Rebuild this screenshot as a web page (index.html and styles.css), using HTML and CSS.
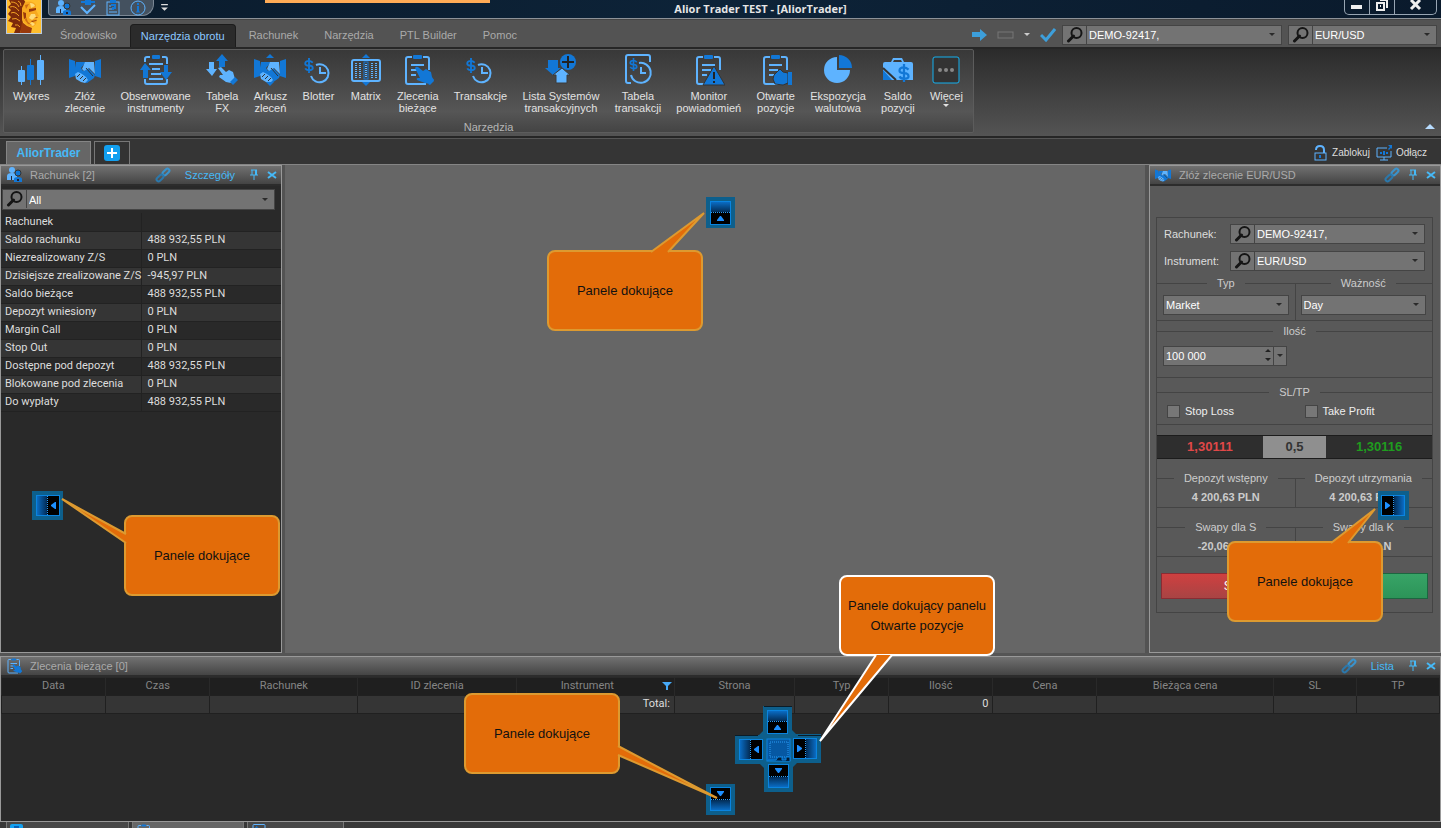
FILE: index.html
```html
<!DOCTYPE html>
<html lang="pl">
<head>
    <meta charset="UTF-8">
    <meta name="viewport" content="width=device-width, initial-scale=1.0">
    <title>Alior Trader TEST - [AliorTrader]</title>
    <link rel="stylesheet" href="styles.css">
</head>
<body>
    <!-- icon set -->
    <svg class="icon-defs" aria-hidden="true">
        <symbol id="i-candles" viewBox="0 0 32 32">
            <g fill="#5eb3ff"><rect x="3" y="16" width="7" height="12" rx="1"/><rect x="6" y="12" width="1" height="19"/><rect x="22" y="6" width="7" height="20" rx="1"/><rect x="25" y="1" width="1" height="30"/></g>
            <g fill="#1277d6"><rect x="12" y="11" width="7" height="15" rx="1"/><rect x="15" y="5" width="1" height="26"/></g>
        </symbol>
        <symbol id="i-hands" viewBox="0 0 32 32">
            <path fill="#1277d6" d="M0 5l6 2v15l-6 2zM32 5l-6 2v15l6 2zM7 8h10l-5 6 2 3 5-3 7 7-1 3-7 5-4-1-9-9z"/>
            <path fill="#5eb3ff" d="M16 8h9l1 12-6-6-5 3-2-2zM6 20l3-2 4 2 4 3 2 3-3 3-4-1-5-3z"/>
            <path stroke="#333" fill="none" d="M8 23l3-3M11 25l3-3M14 27l3-3M17 14l7 8"/>
        </symbol>
        <symbol id="i-clip" viewBox="0 0 32 32">
            <path fill="none" stroke="#5eb3ff" stroke-width="2" d="M10 3H6q-2 0-2 2v23q0 2 2 2h18M21 3h4q2 0 2 2v11"/>
            <rect x="11" y="1" width="9" height="4" rx="1" fill="#1277d6"/>
            <path stroke="#5eb3ff" stroke-width="2" d="M9 11h13M9 16h9M9 21h5"/>
        </symbol>
        <symbol id="i-hand" viewBox="0 0 20 20">
            <path fill="#1277d6" d="M1 2q1-2 3-1l5 4 3-2 3 2 2 1 1 5 2 3-4 4-5-1-8-3q-1-2 1-2l2 0z"/>
            <path fill="#1277d6" d="M14 18l5-5 1 2-4 4z"/>
        </symbol>
        <symbol id="i-orders" viewBox="0 0 32 32">
            <use href="#i-clip" width="32" height="32"/>
            <use href="#i-hand" x="12" y="12" width="20" height="20"/>
        </symbol>
        <symbol id="i-watch" viewBox="0 0 32 32">
            <path fill="none" stroke="#5eb3ff" stroke-width="2" d="M10 3H7q-2 0-2 2v3M22 3h3q2 0 2 2v5M5 25v3q0 2 2 2h18q2 0 2-2v-3"/>
            <rect x="12" y="1" width="8" height="4" rx="1" fill="#1277d6"/>
            <path stroke="#5eb3ff" stroke-width="2" d="M9 10h14M12 15h8M11 20h10M9 25h14"/>
            <path fill="#1277d6" d="M5 9l6 7H8v8H3v-8H0zM24 11h4v7h4l-6 8-6-8h4z"/>
        </symbol>
        <symbol id="i-tabfx" viewBox="0 0 32 32">
            <path fill="#1277d6" d="M16 0l6 7h-3v6h-6V7h-3z"/>
            <path fill="#5eb3ff" d="M3 8h5v7h3l-5 7-6-7h3zM12 14l3-1 5 5 3-2 4 2 2 7-4 4-5-1-7-5 1-2 3 0z"/>
            <path fill="#1277d6" d="M24 28l5-5 3 3-5 5z"/>
        </symbol>
        <symbol id="i-dollar" viewBox="0 0 10 16">
            <path fill="none" stroke="#1277d6" stroke-width="2" d="M9 5Q7 3 5 3 1 3 1 6q0 2 4 2t4 3q0 2-4 2-3 0-4-2M5 0v16"/>
        </symbol>
        <symbol id="i-blotter" viewBox="0 0 32 32">
            <use href="#i-dollar" x="2" y="4" width="10" height="15"/>
            <path fill="none" stroke="#5eb3ff" stroke-width="2" d="M14 11a9 9 0 1 1-5 11M18 13v6h6"/>
        </symbol>
        <symbol id="i-matrix" viewBox="0 0 32 32">
            <rect x="2" y="6" width="28" height="21" rx="2" fill="none" stroke="#5eb3ff" stroke-width="2"/>
            <rect x="14" y="8" width="4" height="17" fill="none" stroke="#1277d6"/>
            <path fill="#1277d6" d="M16 0l4 4h-8zM16 32l4-4h-8z"/>
            <path stroke="#5eb3ff" stroke-width="2" stroke-dasharray="1 1" d="M6 9v15M10 9v15M22 9v15M26 9v15M16 10v13"/>
        </symbol>
        <symbol id="i-systems" viewBox="0 0 32 32">
            <path fill="#1277d6" d="M3 6h10v8h3l-8 7-8-7h3z"/>
            <circle cx="23" cy="8" r="8" fill="#1277d6"/>
            <path stroke="#222" stroke-width="2" d="M17 8h12M23 2v12"/>
            <path fill="#5eb3ff" stroke="#3b3b3b" d="M17 14l8 7h-3v8H11v-8H8z"/>
        </symbol>
        <symbol id="i-tabtrans" viewBox="0 0 32 32">
            <path fill="none" stroke="#5eb3ff" stroke-width="2" d="M9 29H6q-2 0-2-2V3q0-2 2-2h20q2 0 2 2v5"/>
            <use href="#i-dollar" x="7" y="4" width="9" height="13"/>
            <path fill="none" stroke="#5eb3ff" stroke-width="2" d="M17 9a10 10 0 1 1-8 12M19 13v6h5"/>
        </symbol>
        <symbol id="i-monitor" viewBox="0 0 32 32">
            <use href="#i-clip" width="32" height="32"/>
            <path fill="#1277d6" stroke="#333" d="M21 12l11 19H10z"/>
            <path stroke="#222" stroke-width="2" d="M21 18v7M21 27v2"/>
        </symbol>
        <symbol id="i-open" viewBox="0 0 32 32">
            <use href="#i-clip" width="32" height="32"/>
            <path fill="#1277d6" stroke="#333" d="M20 15l3 3 5 1v10l-5 2-8-1-2-5 1-4z"/>
            <path fill="#1277d6" d="M28 18h4v13h-4z"/>
        </symbol>
        <symbol id="i-pie" viewBox="0 0 32 32">
            <path fill="#5eb3ff" d="M15 3v13h13A13 13 0 1 1 15 3z"/>
            <path fill="#1277d6" d="M17 1a13 13 0 0 1 13 13H17z"/>
        </symbol>
        <symbol id="i-case" viewBox="0 0 32 32">
            <path fill="#5eb3ff" d="M3 8h6l2-4h9l2 4h7q2 0 2 2v16H1V10q0-2 2-2z"/>
            <path fill="#3b3b3b" d="M12 6h7l1 2h-9z"/>
            <path fill="none" stroke="#333" stroke-width="2" d="M1 14l13 12"/>
            <path fill="#1277d6" d="M1 16l9 10H1z"/>
            <use href="#i-dollar" x="16" y="10" width="12" height="18"/>
        </symbol>
        <symbol id="i-more" viewBox="0 0 32 32">
            <rect x="3" y="3" width="26" height="26" rx="2" fill="#333" stroke="#14b1f0"/>
            <g fill="#888"><circle cx="10" cy="16" r="2"/><circle cx="16" cy="16" r="2"/><circle cx="22" cy="16" r="2"/></g>
        </symbol>
        <symbol id="i-users" viewBox="0 0 16 16">
            <circle cx="6" cy="3" r="3" fill="#5eb3ff"/><path fill="#5eb3ff" d="M1 13V9q0-3 5-3t5 3v4z"/>
            <circle cx="12" cy="6" r="3" fill="#1277d6" stroke="#333"/><path fill="#1277d6" d="M8 15v-3q0-2 4-2t4 2v3z"/>
            <path fill="#223" d="M5 9h1v4H5zM11 12h2v2h-2z"/>
        </symbol>
        <symbol id="i-plug" viewBox="0 0 16 16">
            <path fill="#1277d6" d="M1 1h4V0h6v1h4v2h-4v2H5V3H1z"/><path fill="none" stroke="#5eb3ff" stroke-width="2" d="M1 7l6 6 8-8"/>
        </symbol>
        <symbol id="i-help" viewBox="0 0 16 16">
            <rect x="2" y="2" width="12" height="13" fill="none" stroke="#5eb3ff"/><path stroke="#5eb3ff" d="M4 12h8M4 9h3M4 6h2"/>
            <rect x="5" y="0" width="6" height="3" fill="#1277d6"/><path fill="none" stroke="#1277d6" stroke-width="2" d="M6 5h4v3H8v2"/>
        </symbol>
        <symbol id="i-info" viewBox="0 0 16 16">
            <circle cx="8" cy="8" r="7" fill="none" stroke="#5eb3ff"/><path stroke="#1277d6" stroke-width="2" d="M8 3v2M8 6v6"/><path stroke="#1277d6" d="M6 12h4"/>
        </symbol>
        <symbol id="i-loupe" viewBox="0 0 16 16">
            <circle cx="10" cy="6" r="5" fill="none" stroke="#151515" stroke-width="2"/><path stroke="#151515" stroke-width="3" stroke-linecap="round" d="M7 9l-5 5"/>
        </symbol>
        <symbol id="i-arrow" viewBox="0 0 8 8"><path fill="currentColor" d="M1 2h6L4 5z"/></symbol>
        <symbol id="i-link" viewBox="0 0 16 16">
            <g fill="none" stroke-width="2"><rect x="7" y="3" width="8" height="4" rx="2" stroke="#3a93cc" transform="rotate(-45 11 5)"/><rect x="1" y="9" width="8" height="4" rx="2" stroke="#2c78ab" transform="rotate(-45 5 11)"/></g>
        </symbol>
        <symbol id="i-pin" viewBox="0 0 10 12"><path fill="none" stroke="#46b9f7" d="M3 1v5M2 1h6M1 6h8M5 6v5"/><path stroke="#46b9f7" stroke-width="2" d="M7 1v5"/></symbol>
        <symbol id="i-x" viewBox="0 0 10 10"><path stroke="#46b9f7" stroke-width="2" d="M1 2l8 6M9 2L1 8"/></symbol>
        <symbol id="i-lock" viewBox="0 0 16 16">
            <path fill="none" stroke="#5eb3ff" stroke-width="2" d="M4 5q0-4 4-4t4 4v3"/><rect x="3" y="8" width="11" height="7" fill="none" stroke="#5eb3ff"/><rect x="7" y="10" width="2" height="3" fill="#1277d6"/>
        </symbol>
        <symbol id="i-screen" viewBox="0 0 16 16">
            <path fill="none" stroke="#5eb3ff" d="M11 3H1v9h14V6M8 12v3M4 15h8"/><path fill="#1277d6" d="M12 0h4v4l-1-1-2 2-1-1 2-2zM4 7h2v2H4zM7 6h2v4H7zM10 7h2v2h-2z"/>
        </symbol>
        <symbol id="i-funnel" viewBox="0 0 10 10"><path fill="#46a9f7" d="M0 1h10L6 5v4H4V5z"/></symbol>
        <!-- docking target, "up" variant; the others are rotated -->
        <symbol id="i-dock" viewBox="0 0 29 31">
            <rect width="29" height="31" fill="#0d5f8c"/>
            <rect x="4" y="4" width="21" height="24" fill="#0a84e0"/>
            <rect x="5" y="5" width="19" height="22" fill="#000"/>
            <rect x="5" y="5" width="19" height="10" fill="url(#g-dock)"/>
            <path stroke="#2a9bf5" stroke-dasharray="1 1" d="M5 15.500h19"/><path fill="#1e90ff" d="M14 19h1l3 4v1h-7v-1z"/>
        </symbol>
        <linearGradient id="g-dock" x2="0" y2="1"><stop stop-color="#0a6cc4"/><stop offset="1" stop-color="#032c55"/></linearGradient>
    </svg>

    <div class="app">
        <header class="titlebar">
            <svg class="app-logo" viewBox="0 0 36 34" aria-label="Alior">
                <rect width="36" height="34" fill="#b9c9dd"/><rect x="1" y="0" width="34" height="33" fill="#ffbe2c"/>
                <path fill="#7d2a0a" d="M3 0h15l2 3-3 4 1 6-2 5 1 6-3 9H8l2-5-5-1 2-4-5-2 3-4-3-3 3-4-3-3 3-3z"/>
                <path fill="none" stroke="#f0a024" d="M5 2q6 0 8 5M4 7q5-2 9 4M5 13q4-2 8 3M6 19q4-2 8 2M9 25q3-1 5 2M12 1q3 1 3 5"/>
                <path fill="#f7a81f" d="M19 2q8-2 11 3v5l3 6-2 1v3l-1 4-3 3-5-1-6-6V8z"/>
                <path fill="#ffdc7a" d="M24 3q4 0 5 3l-4 2zM25 14h4l1 3-4 3-3-2zM26 22l3 2-2 2-4-2z"/>
                <path fill="#9a3a0c" d="M23 9l7-1v2l-3 1-4 1zM28 18l4-1-1 1zM25 21l6-1-1 1-4 1zM17 12l3 1v5l-2 1zM16 22l5 4 5 2-1 5H14z"/>
                <path fill="#ce6c12" d="M19 5l4-1-3 5zM20 17l2 5 4 3-4-1-3-4z"/>
            </svg>
            <nav class="quick" aria-label="Szybki dostęp">
                <button class="icon-btn" aria-label="Konta"><svg width="16" height="16"><use href="#i-users"/></svg></button>
                <button class="icon-btn" aria-label="Połącz"><svg width="16" height="16"><use href="#i-plug"/></svg></button>
                <button class="icon-btn" aria-label="Instrukcja"><svg width="16" height="16"><use href="#i-help"/></svg></button>
                <button class="icon-btn" aria-label="Informacje"><svg width="16" height="16"><use href="#i-info"/></svg></button>
            </nav>
            <svg class="quick-more" viewBox="0 0 8 8" aria-hidden="true"><path fill="#ddd" d="M1 0h6v1H1zM1 3h6L4 6z"/></svg>
            <h1 class="title">Alior Trader TEST - [AliorTrader]</h1>
            <div class="win-buttons">
                <button aria-label="Minimalizuj"><svg width="14" height="12"><path fill="#eee" d="M1 5h11v4H1z"/></svg></button>
                <button aria-label="Przywróć"><svg width="14" height="12"><path fill="none" stroke="#eee" stroke-width="2" d="M5 0h7v8M2 3h7v7H2zM5 6h1"/></svg></button>
                <button class="close" aria-label="Zamknij"><svg width="14" height="12"><path stroke="#eee" stroke-width="3" d="M2 0l9 9M11 0L2 9"/></svg></button>
            </div>
        </header>

        <div class="menubar">
            <nav class="menu">
                <a href="#">Środowisko</a>
                <a href="#" class="active">Narzędzia obrotu</a>
                <a href="#">Rachunek</a>
                <a href="#">Narzędzia</a>
                <a href="#">PTL Builder</a>
                <a href="#">Pomoc</a>
            </nav>
            <div class="menu-tools">
                <svg width="16" height="14"><path fill="#3d9fdb" d="M0 4h8V1l7 6-7 6V9H0z"/></svg>
                <svg width="17" height="8"><rect x="1" y="1" width="15" height="6" fill="none" stroke="#777"/></svg>
                <svg class="light" width="8" height="8"><use href="#i-arrow"/></svg>
                <svg width="16" height="14"><path fill="none" stroke="#3d9fdb" stroke-width="3" d="M1 7l5 5 9-11"/></svg>
            </div>
            <div class="combo combo-wide">
                <svg class="loupe"><use href="#i-loupe"/></svg>
                <select aria-label="Rachunek"><option>DEMO-92417,</option></select>
                <svg class="arrow"><use href="#i-arrow"/></svg>
            </div>
            <div class="combo combo-narrow">
                <svg class="loupe"><use href="#i-loupe"/></svg>
                <select aria-label="Instrument"><option>EUR/USD</option></select>
                <svg class="arrow"><use href="#i-arrow"/></svg>
            </div>
        </div>

        <div class="ribbon">
            <section class="ribbon-group">
                <div class="tools">
                    <button class="tool"><svg><use href="#i-candles"/></svg>Wykres</button>
                    <button class="tool"><svg><use href="#i-hands"/></svg>Złóż<br>zlecenie</button>
                    <button class="tool"><svg><use href="#i-watch"/></svg>Obserwowane<br>instrumenty</button>
                    <button class="tool"><svg><use href="#i-tabfx"/></svg>Tabela<br>FX</button>
                    <button class="tool"><svg viewBox="0 0 32 32"><use href="#i-hands"/><path fill="#1277d6" d="M16 0l4 4h-8zM16 32l4-4h-8z"/></svg>Arkusz<br>zleceń</button>
                    <button class="tool"><svg><use href="#i-blotter"/></svg>Blotter</button>
                    <button class="tool"><svg><use href="#i-matrix"/></svg>Matrix</button>
                    <button class="tool"><svg><use href="#i-orders"/></svg>Zlecenia<br>bieżące</button>
                    <button class="tool"><svg><use href="#i-blotter"/></svg>Transakcje</button>
                    <button class="tool"><svg><use href="#i-systems"/></svg>Lista Systemów<br>transakcyjnych</button>
                    <button class="tool"><svg><use href="#i-tabtrans"/></svg>Tabela<br>transakcji</button>
                    <button class="tool"><svg><use href="#i-monitor"/></svg>Monitor<br>powiadomień</button>
                    <button class="tool"><svg><use href="#i-open"/></svg>Otwarte<br>pozycje</button>
                    <button class="tool"><svg><use href="#i-pie"/></svg>Ekspozycja<br>walutowa</button>
                    <button class="tool"><svg><use href="#i-case"/></svg>Saldo<br>pozycji</button>
                    <button class="tool"><svg><use href="#i-more"/></svg>Więcej<svg class="drop"><use href="#i-arrow"/></svg></button>
                </div>
                <div class="group-name">Narzędzia</div>
            </section>
            <button class="collapse" aria-label="Zwiń wstążkę"><svg width="10" height="6"><path fill="#b7dcff" d="M5 0l5 5H0z"/></svg></button>
        </div>

        <div class="tabstrip">
            <button class="ws-tab">AliorTrader</button>
            <button class="ws-add" aria-label="Dodaj"><svg width="16" height="16"><rect width="16" height="16" rx="3" fill="#12a0f0"/><path stroke="#fff" stroke-width="2" d="M8 3v10M3 8h10"/></svg></button>
            <div class="strip-actions">
                <button><svg width="16" height="16"><use href="#i-lock"/></svg>Zablokuj</button>
                <button><svg width="16" height="16"><use href="#i-screen"/></svg>Odłącz</button>
            </div>
        </div>

        <main class="workspace">
            <section class="panel panel-left">
                <header class="panel-head">
                    <svg class="head-icon"><use href="#i-users"/></svg>
                    <h2>Rachunek [2]</h2>
                    <svg class="head-link"><use href="#i-link"/></svg>
                    <a href="#">Szczegóły</a>
                    <button class="icon-btn" aria-label="Przypnij"><svg width="10" height="12"><use href="#i-pin"/></svg></button>
                    <button class="icon-btn" aria-label="Zamknij"><svg width="10" height="10"><use href="#i-x"/></svg></button>
                </header>
                <div class="filter">
                    <div class="combo">
                        <svg class="loupe"><use href="#i-loupe"/></svg>
                        <select aria-label="Filtr"><option>All</option></select>
                        <svg class="arrow"><use href="#i-arrow"/></svg>
                    </div>
                </div>
                <table class="account">
                    <tr><th>Rachunek</th><td></td></tr>
                    <tr><th>Saldo rachunku</th><td>488 932,55 PLN</td></tr>
                    <tr><th>Niezrealizowany Z/S</th><td>0 PLN</td></tr>
                    <tr><th>Dzisiejsze zrealizowane Z/S</th><td>-945,97 PLN</td></tr>
                    <tr><th>Saldo bieżące</th><td>488 932,55 PLN</td></tr>
                    <tr><th>Depozyt wniesiony</th><td>0 PLN</td></tr>
                    <tr><th>Margin Call</th><td>0 PLN</td></tr>
                    <tr><th>Stop Out</th><td>0 PLN</td></tr>
                    <tr><th>Dostępne pod depozyt</th><td>488 932,55 PLN</td></tr>
                    <tr><th>Blokowane pod zlecenia</th><td>0 PLN</td></tr>
                    <tr><th>Do wypłaty</th><td>488 932,55 PLN</td></tr>
                </table>
            </section>

            <div class="canvas"></div>

            <section class="panel panel-right">
                <header class="panel-head">
                    <svg class="head-icon"><use href="#i-hands"/></svg>
                    <h2>Złóż zlecenie EUR/USD</h2>
                    <svg class="head-link"><use href="#i-link"/></svg>
                    <button class="icon-btn" aria-label="Przypnij"><svg width="10" height="12"><use href="#i-pin"/></svg></button>
                    <button class="icon-btn" aria-label="Zamknij"><svg width="10" height="10"><use href="#i-x"/></svg></button>
                </header>
                <form class="order">
                    <div class="field">
                        <label for="acc">Rachunek:</label>
                        <div class="combo">
                            <svg class="loupe"><use href="#i-loupe"/></svg>
                            <select id="acc"><option>DEMO-92417,</option></select>
                            <svg class="arrow"><use href="#i-arrow"/></svg>
                        </div>
                    </div>
                    <div class="field">
                        <label for="instr">Instrument:</label>
                        <div class="combo">
                            <svg class="loupe"><use href="#i-loupe"/></svg>
                            <select id="instr"><option>EUR/USD</option></select>
                            <svg class="arrow"><use href="#i-arrow"/></svg>
                        </div>
                    </div>
                    <div class="pair pair-select">
                        <div class="cell">
                            <label class="rule" for="typ">Typ</label>
                            <div class="combo">
                                <select id="typ"><option>Market</option></select>
                                <svg class="arrow"><use href="#i-arrow"/></svg>
                            </div>
                        </div>
                        <div class="cell">
                            <label class="rule" for="valid">Ważność</label>
                            <div class="combo">
                                <select id="valid"><option>Day</option></select>
                                <svg class="arrow"><use href="#i-arrow"/></svg>
                            </div>
                        </div>
                    </div>
                    <div class="block amount">
                        <label class="rule" for="qty">Ilość</label>
                        <div class="combo">
                            <input id="qty" type="text" value="100 000">
                            <svg class="spin" viewBox="0 0 8 16"><path fill="#222" d="M1 5h6L4 2zM1 11h6l-3 3z"/></svg>
                            <svg class="arrow split"><use href="#i-arrow"/></svg>
                        </div>
                    </div>
                    <div class="block sltp">
                        <div class="rule">SL/TP</div>
                        <div class="checks">
                            <label><input type="checkbox">Stop Loss</label>
                            <label><input type="checkbox">Take Profit</label>
                        </div>
                    </div>
                    <div class="prices">
                        <span class="sell">1,30111</span>
                        <span class="spread">0,5</span>
                        <span class="buy">1,30116</span>
                    </div>
                    <div class="pair">
                        <div class="cell"><div class="rule">Depozyt wstępny</div><b>4 200,63 PLN</b></div>
                        <div class="cell"><div class="rule">Depozyt utrzymania</div><b>4 200,63 PLN</b></div>
                    </div>
                    <div class="pair">
                        <div class="cell"><div class="rule">Swapy dla S</div><b>-20,06 PLN</b></div>
                        <div class="cell"><div class="rule">Swapy dla K</div><b>-12,35 PLN</b></div>
                    </div>
                    <div class="submit">
                        <button type="button" class="btn-sell">S</button>
                        <button type="button" class="btn-buy">K</button>
                    </div>
                </form>
            </section>
        </main>

        <section class="panel panel-bottom">
            <header class="panel-head">
                <svg class="head-icon"><use href="#i-orders"/></svg>
                <h2>Zlecenia bieżące [0]</h2>
                <svg class="head-link"><use href="#i-link"/></svg>
                <a href="#">Lista</a>
                <button class="icon-btn" aria-label="Przypnij"><svg width="10" height="12"><use href="#i-pin"/></svg></button>
                <button class="icon-btn" aria-label="Zamknij"><svg width="10" height="10"><use href="#i-x"/></svg></button>
            </header>
            <table class="orders">
                <colgroup><col class="c-m"><col class="c-m"><col class="c-xl"><col class="c-xxl"><col class="c-xxl"><col class="c-l"><col class="c-s"><col class="c-m"><col class="c-m"><col class="c-xxxl"><col class="c-xs"><col class="c-xs"></colgroup>
                <thead>
                    <tr><th>Data</th><th>Czas</th><th>Rachunek</th><th>ID zlecenia</th><th><span class="filtered">Instrument <svg width="10" height="10"><use href="#i-funnel"/></svg></span></th><th>Strona</th><th>Typ</th><th>Ilość</th><th>Cena</th><th>Bieżąca cena</th><th>SL</th><th>TP</th></tr>
                </thead>
                <tbody>
                    <tr><td></td><td></td><td></td><td></td><td>Total:</td><td></td><td></td><td>0</td><td></td><td></td><td></td><td></td></tr>
                </tbody>
            </table>
        </section>

        <footer class="bottom-tabs">
            <button aria-label="Otwarte pozycje"><svg width="16" height="16"><rect width="13" height="12" rx="2" fill="#12a0f0"/><rect x="4" y="2" width="5" height="8" fill="#0a5fb4"/></svg></button>
            <button class="active" aria-label="Zlecenia bieżące"><svg width="16" height="16"><use href="#i-orders"/></svg></button>
            <button aria-label="Transakcje"><svg width="16" height="16"><use href="#i-tabtrans"/></svg></button>
        </footer>
    </div>

    <!-- docking targets and callouts floating over the window -->
    <div class="overlay">
        <div class="strip"></div>
        <svg class="dock dock-top"><use href="#i-dock"/></svg>
        <svg class="dock dock-bottom"><use href="#i-dock"/></svg>
        <svg class="dock dock-left"><use href="#i-dock"/></svg>
        <svg class="dock dock-right"><use href="#i-dock"/></svg>
        <svg class="compass" viewBox="0 0 86 86">
            <path fill="#0d5f8c" d="M29 0h28v24l5 5h24v28H62l-5 5v24H29V62l-5-5H0V29h24l5-5z"/>
            <use href="#i-dock" x="28" y="0" width="29" height="31"/>
            <use href="#i-dock" x="28" y="0" width="29" height="31" transform="rotate(180 43 43)"/>
            <use href="#i-dock" x="28" y="0" width="29" height="31" transform="rotate(-90 43 43)"/>
            <use href="#i-dock" x="28" y="0" width="29" height="31" transform="rotate(90 43 43)"/>
            <path fill="#0a1c28" d="M29 0h28v1H29zM0 29h23v1H0zM63 29h23v1H63z"/>
            <rect x="32" y="33" width="23" height="22" fill="#0658a3" stroke="#0a84e0"/>
            <rect x="35" y="36" width="18" height="15" fill="none" stroke="#2a9bf5" stroke-dasharray="1 1"/>
            <path fill="#031a33" stroke="#0a84e0" d="M33 54h8l2-3h4v3h4v-3h4v4"/>
        </svg>
        <div class="callout co-top">Panele dokujące</div>
        <div class="callout co-left">Panele dokujące</div>
        <div class="callout co-right">Panele dokujące</div>
        <div class="callout co-bottom">Panele dokujące</div>
        <div class="callout co-compass">Panele dokujący panelu<br>Otwarte pozycje</div>
        <svg class="tails" viewBox="0 0 1441 828">
            <path d="M651 252L704 213 668 252"/>
            <path d="M126 534L62 499 126 543"/>
            <path d="M1331 543L1375 509 1348 543"/>
            <path d="M618 746L717 798 618 755"/>
            <path class="white" d="M876 655L820 741 892 655"/>
        </svg>
    </div>
</body>
</html>
```
FILE: styles.css
```css
* {
    margin: 0;
    padding: 0;
    box-sizing: border-box;
}

body {
    font-family: "Liberation Sans", Arial, sans-serif;
    font-size: 11px;
    color: #ddd;
    background: #555;
    overflow: hidden;
    position: relative;
}

button, select, input {
    font: inherit;
    color: inherit;
    background: none;
    border: none;
    border-radius: 0;
    appearance: none;
    outline: none;
}

button {
    cursor: pointer;
}

a {
    color: inherit;
    text-decoration: none;
}

svg {
    display: block;
    flex: none;
}

.icon-defs {
    position: absolute;
    width: 0;
    height: 0;
}

.icon-btn {
    display: flex;
    align-items: center;
}

.app {
    display: flex;
    flex-direction: column;
    height: 100vh;
}

/* title bar */
.titlebar {
    display: flex;
    align-items: flex-start;
    height: 19px;
    padding-left: 48px;
    background: linear-gradient(90deg, #0a1b2c, #0d2338 50%, #0a1a2c);
    border-bottom: 1px solid #8d9298;
    position: relative;
}

.app-logo {
    position: absolute;
    left: 6px;
    top: 0;
    width: 36px;
    height: 34px;
    z-index: 2;
}

.quick {
    display: flex;
    gap: 9px;
    height: 16px;
    width: 106px;
    padding-left: 6px;
    background: #44515f;
    border: 1px solid #7b8794;
    border-top: none;
    border-radius: 0 0 12px 4px;
}

.quick-more {
    width: 9px;
    height: 9px;
    margin: 4px 0 0 6px;
}

.title {
    flex: 1;
    font: bold 11px/18px "Open Sans", sans-serif;
    text-align: center;
    color: #e6e6e6;
    padding-left: 8px;
}

.win-buttons {
    display: flex;
    height: 15px;
    margin-right: 4px;
    border: 1px solid #98a5b3;
    border-top: none;
    border-radius: 0 0 5px 5px;
}

.win-buttons button {
    width: 25px;
    display: flex;
    justify-content: center;
    border-right: 1px solid #98a5b3;
}

.win-buttons .close {
    width: 41px;
    border-right: none;
}

/* menu */
.menubar {
    display: flex;
    align-items: flex-end;
    height: 30px;
    padding: 0 4px 2px 47px;
    background: #535353;
    border-bottom: 2px solid #262626;
    gap: 6px;
    border-top: 1px solid #444;
}

.menu {
    display: flex;
    flex: 1;
    line-height: 22px;
    color: #aaa;
    margin-bottom: -2px;
}

.menu a {
    padding: 0 13px;
}

.menu .active {
    padding: 0 10px;
    color: #8cc8ff;
    background: #2b2b2b;
    border: 1px solid #1c1c1c;
    border-bottom: none;
    border-radius: 4px 4px 0 0;
}

.menu-tools {
    display: flex;
    align-items: center;
    gap: 9px;
    height: 20px;
}

.light {
    color: #ccc;
}

.combo {
    display: flex;
    align-items: stretch;
    height: 20px;
    background: #737373;
    border: 1px solid #444;
    color: #fff;
}

.combo select,
.combo input {
    flex: 1;
    min-width: 0;
    padding: 0 2px;
}

.loupe {
    width: 24px;
    padding: 1px 3px;
    border-right: 1px solid #444;
    height: 18px;
}

.arrow {
    width: 18px;
    height: 8px;
    padding: 0 5px;
    align-self: center;
    color: #2a2a2a;
}

.combo-wide {
    width: 220px;
}

.combo-narrow {
    width: 149px;
}

/* ribbon */
.ribbon {
    display: flex;
    justify-content: space-between;
    align-items: flex-end;
    height: 89px;
    padding: 2px 6px 3px 3px;
    background: linear-gradient(#2b2b2b, #545454);
    border-bottom: 2px solid #262626;
}

.ribbon-group {
    width: 971px;
    height: 84px;
    background: linear-gradient(#383838, #565656 75%, #444);
    border: 1px solid #5c5c5c;
    border-radius: 2px;
}

.tools {
    display: flex;
    justify-content: space-between;
    height: 71px;
    padding: 4px 10px 0 9px;
}

.tool {
    display: flex;
    flex-direction: column;
    align-items: center;
    line-height: 12px;
    color: #e2e2e2;
}

.tool svg {
    width: 32px;
    height: 32px;
    margin-bottom: 4px;
}

.tool .drop {
    width: 8px;
    height: 8px;
}

.group-name {
    text-align: center;
    line-height: 12px;
    color: #b5b5b5;
}

.collapse {
    height: 12px;
}

/* workspace tabs */
.tabstrip {
    display: flex;
    align-items: flex-end;
    gap: 3px;
    height: 27px;
    padding: 0 14px 0 6px;
    background: #353535;
    border-top: 1px solid #555;
    border-bottom: 1px solid #858585;
}

.ws-tab {
    width: 85px;
    height: 23px;
    font-size: 12px;
    font-weight: bold;
    color: #46b9f7;
    background: #666;
    border: 1px solid #858585;
    border-bottom: none;
}

.ws-add {
    display: flex;
    align-items: center;
    justify-content: center;
    width: 36px;
    height: 23px;
    background: #333;
    border: 1px solid #777;
    border-bottom: none;
}

.strip-actions {
    display: flex;
    gap: 6px;
    margin-left: auto;
    height: 23px;
    font-size: 10px;
}

.strip-actions button {
    display: flex;
    align-items: center;
    gap: 4px;
}

/* panels */
.workspace {
    display: flex;
    flex: 1;
    min-height: 0;
    background: #535353;
}

.panel {
    display: flex;
    flex-direction: column;
    background: #292929;
    border: 1px solid #999;
}

.panel-left {
    width: 282px;
}

.canvas {
    flex: 1;
    margin: 0 4px 0 3px;
    background: #666;
}

.panel-right {
    width: 292px;
    background: #595959;
}

.panel-head {
    display: flex;
    align-items: center;
    gap: 8px;
    height: 20px;
    padding: 0 4px 0 5px;
    background: linear-gradient(#717171, #444);
    border-bottom: 2px solid #2c2c2c;
    color: #46b9f7;
}

.panel-head a {
    margin: 0 6px;
}

.panel-head h2 {
    flex: 1;
    font-size: 11px;
    font-weight: normal;
    color: #aaa;
}

.head-icon,
.head-link {
    width: 16px;
    height: 16px;
}

.filter {
    padding: 3px 6px 3px 1px;
}

.filter .combo {
    height: 21px;
}

.account,
.orders {
    border-collapse: collapse;
    table-layout: fixed;
    width: 100%;
    font: 11px/14px Roboto, sans-serif;
}

.account tr {
    height: 18px;
}

.account tr:nth-child(even) {
    background: #353535;
}

.account th {
    width: 140px;
    padding: 0 4px;
    font-weight: normal;
    text-align: left;
    white-space: nowrap;
    border-right: 1px solid #222;
    border-bottom: 1px solid #222;
}

.account td {
    padding: 0 6px;
    border-bottom: 1px solid #222;
}

/* order form */
.order {
    display: flex;
    flex-direction: column;
    margin: 31px 7px 0 6px;
    padding-top: 1px;
    border: 1px solid #444;
}

.field {
    display: flex;
    padding: 5px 7px 0;
    height: 27px;
}

.field label {
    width: 66px;
    line-height: 20px;
}

.field .combo {
    flex: 1;
}

.pair {
    display: flex;
    height: 40px;
    margin-bottom: 9px;
}

.pair-select {
    height: 48px;
    margin-bottom: 0;
}

.cell {
    flex: 1;
    min-width: 0;
    display: flex;
    flex-direction: column;
    border-bottom: 1px solid #444;
}

/* divider starts at the caption line, not above it */
.cell + .cell {
    background: linear-gradient(#444, #444) 0 10px / 1px 100% no-repeat;
}

.cell b {
    text-align: center;
    line-height: 18px;
    color: #ccc;
}

.cell .combo,
.amount .combo {
    margin: 2px 6px 0;
}

.rule {
    display: flex;
    align-items: center;
    gap: 10px;
    line-height: 20px;
    white-space: nowrap;
    color: #ccc;
}

.rule::before,
.rule::after {
    content: "";
    flex: 1;
    height: 1px;
    background: #444;
}

.block {
    border-bottom: 1px solid #444;
}

.amount {
    height: 57px;
}

.amount .combo {
    width: 124px;
    margin-top: 5px;
}

.spin {
    width: 10px;
    height: 16px;
}

.arrow.split {
    width: 13px;
    height: 18px;
    padding: 0 2px;
    border-left: 1px solid #444;
}

.sltp {
    height: 47px;
    padding-top: 4px;
}

.checks {
    display: flex;
    color: #eee;
}

.checks label {
    flex: 1;
    display: flex;
    align-items: center;
    gap: 5px;
    line-height: 18px;
    padding-left: 10px;
}

.checks input {
    width: 13px;
    height: 13px;
    background: #777;
    border: 1px solid #444;
}

.prices {
    display: flex;
    height: 24px;
    margin: 10px 0 9px;
    background: #2e2e2e;
    border: 1px solid #1c1c1c;
    border-width: 1px 0;
    font-size: 13px;
    font-weight: bold;
    line-height: 22px;
    text-align: center;
}

.prices span {
    flex: 5;
}

.prices .spread {
    flex: 3;
    background: #8f8f8f;
    color: #333;
}

.sell {
    color: #e04848;
}

.buy {
    color: #1f9c1f;
}

.submit {
    display: flex;
    padding: 7px 4px 13px;
}

.submit button {
    flex: 1;
    height: 26px;
    font-size: 12px;
    color: #fff;
    border: 1px solid #8a2c33;
}

.btn-sell {
    background: linear-gradient(#cf4040, #a84444);
}

.submit .btn-buy {
    background: linear-gradient(#38a467, #2c9458);
    border-color: #1c6640;
}

/* orders panel */
.panel-bottom {
    height: 166px;
    margin-top: 3px;
}

.orders {
    margin-top: 1px;
}

.orders th {
    height: 17px;
    font-weight: normal;
    color: #858585;
    background: #1f1f1f;
    border-right: 1px solid #292929;
}

.orders td {
    height: 18px;
    padding-right: 4px;
    text-align: right;
    background: #353535;
    border: 1px solid #202020;
}

.filtered {
    display: flex;
    justify-content: flex-end;
    align-items: center;
    gap: 48px;
    padding-right: 2px;
}

.c-xs {
    width: 83px;
}

.c-s {
    width: 94px;
}

.c-m {
    width: 104px;
}

.c-l {
    width: 120px;
}

.c-xl {
    width: 148px;
}

.c-xxl {
    width: 158px;
}

.c-xxxl {
    width: 176px;
}

.bottom-tabs {
    display: flex;
    gap: 3px;
    height: 6px;
    padding-left: 6px;
    background: #383838;
    overflow: hidden;
}

.bottom-tabs button {
    width: 97px;
    height: 20px;
    padding: 1px 3px;
    background: #484848;
    border: 1px solid #777;
    border-top: none;
}

.bottom-tabs button:first-child {
    width: 123px;
}

.bottom-tabs .active {
    width: 112px;
    background: #666;
}

/* overlay */
.overlay {
    position: absolute;
    left: 0;
    top: 0;
    width: 1441px;
    height: 828px;
    pointer-events: none;
}

.overlay > * {
    position: absolute;
}

.strip {
    left: 265px;
    top: 0;
    width: 225px;
    height: 3px;
    background: #ffab56;
}

.dock {
    width: 29px;
    height: 31px;
}

.dock-top {
    left: 706px;
    top: 197px;
}

.dock-bottom {
    left: 706px;
    top: 784px;
    transform: rotate(180deg);
}

.dock-left {
    left: 33px;
    top: 490px;
    transform: rotate(-90deg);
}

.dock-right {
    left: 1379px;
    top: 490px;
    transform: rotate(90deg);
}

.compass {
    left: 735px;
    top: 706px;
    width: 86px;
    height: 86px;
}

.callout {
    display: flex;
    align-items: center;
    justify-content: center;
    width: 156px;
    height: 81px;
    font-size: 13px;
    line-height: 20px;
    text-align: center;
    color: #111;
    background: #e36c09;
    border: 2px solid #dd9a30;
    border-radius: 8px;
}

.co-top {
    left: 547px;
    top: 250px;
}

.co-left {
    left: 124px;
    top: 515px;
}

.co-right {
    left: 1227px;
    top: 541px;
}

.co-bottom {
    left: 464px;
    top: 693px;
}

.co-compass {
    left: 839px;
    top: 575px;
    border-color: #fff;
}

.tails {
    left: 0;
    top: 0;
    width: 1441px;
    height: 828px;
}

.tails path {
    fill: #e36c09;
    stroke: #dd9a30;
    stroke-width: 2px;
}

.tails .white {
    stroke: #fff;
}
```
